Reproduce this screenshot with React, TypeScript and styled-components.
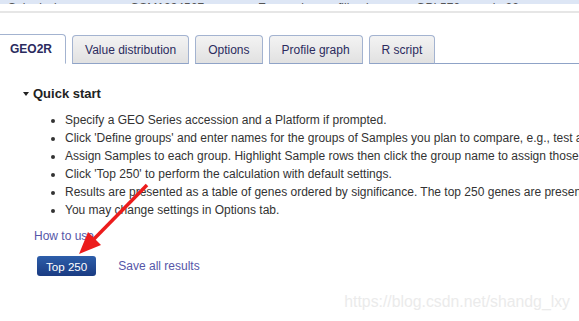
import styled, { createGlobalStyle } from 'styled-components';

const GlobalStyle = createGlobalStyle`
  html, body {
    margin: 0;
    padding: 0;
    background: #fff;
  }
  body {
    font-family: "Liberation Sans", Arial, sans-serif;
    color: #333;
    overflow: hidden;
  }
`;

const tabs = ['GEO2R', 'Value distribution', 'Options', 'Profile graph', 'R script'];

const steps = [
    'Specify a GEO Series accession and a Platform if prompted.',
    "Click 'Define groups' and enter names for the groups of Samples you plan to compare, e.g., test and control.",
    'Assign Samples to each group. Highlight Sample rows then click the group name to assign those Samples to the group.',
    "Click 'Top 250' to perform the calculation with default settings.",
    'Results are presented as a table of genes ordered by significance. The top 250 genes are presented.',
    'You may change settings in Options tab.',
];

const App = () => {
    return (
        <Page>
            <GlobalStyle />
            <TopRow>
                <TopCell $width={122}>Submission</TopCell>
                <TopCell $width={128}>GSM1234567</TopCell>
                <TopCell $width={260}>Expression profiling by array: GPL570 sample 22</TopCell>
            </TopRow>
            <Separator />
            <TabBar>
                {tabs.map((t, i) => (
                    <Tab key={t} $active={i === 0}>{t}</Tab>
                ))}
                <TabFill />
            </TabBar>
            <Content>
                <SectionTitle>
                    <Caret />
                    Quick start
                </SectionTitle>
                <StepList>
                    {steps.map((s) => <Step key={s}>{s}</Step>)}
                </StepList>
                <HowTo>How to use</HowTo>
                <Actions>
                    <PrimaryButton>Top 250</PrimaryButton>
                    <ActionLink>Save all results</ActionLink>
                </Actions>
            </Content>
            <Arrow width="579" height="321" viewBox="0 0 579 321">
                <line x1="147" y1="185" x2="94" y2="239" stroke="#ec1c1c" strokeWidth="3.5" />
                <polygon points="79,254 88,232 101,245" fill="#ec1c1c" />
            </Arrow>
            <Watermark>https://blog.csdn.net/shandg_lxy</Watermark>
        </Page>
    )
}

export default App

const Page = styled.div`
  position: relative;
  width: 579px;
  height: 321px;
  overflow: hidden;
`;

const TopRow = styled.div`
  display: flex;
  align-items: flex-end;
  height: 4px;
  overflow: hidden;
  background: #dde6f5;
  padding-left: 8px;
`;

const TopCell = styled.div<{ $width: number }>`
  width: ${(p) => p.$width}px;
  flex-shrink: 0;
  font-size: 12px;
  line-height: 12px;
  white-space: nowrap;
  color: #555;
  transform: translateY(10px);
`;

const Separator = styled.div`
  margin-top: 7px;
  height: 2px;
  background: #e6e6e6;
`;

const TabBar = styled.div`
  display: flex;
  align-items: flex-end;
  margin-top: 21px;
  margin-left: -4px;
  gap: 6px;
`;

const Tab = styled.div<{ $active?: boolean }>`
  height: ${(p) => (p.$active ? '28px' : '27px')};
  padding: 0 ${(p) => (p.$active ? '13px' : '12px')};
  display: flex;
  align-items: center;
  font-size: 12px;
  font-weight: ${(p) => (p.$active ? 700 : 400)};
  color: #2b2b5e;
  border: 1px solid #a3b3d0;
  border-bottom: ${(p) => (p.$active ? '1px solid #fff' : '1px solid #8fa3c7')};
  border-radius: 4px 4px 0 0;
  background: ${(p) => (p.$active ? '#fff' : 'linear-gradient(#f3f3f3, #e1e1e1)')};
  white-space: nowrap;
`;

const TabFill = styled.div`
  flex: 1;
  margin-left: -6px;
  border-bottom: 1px solid #8fa3c7;
`;

const Content = styled.div`
  padding-left: 23px;
`;

const SectionTitle = styled.div`
  display: flex;
  align-items: center;
  gap: 4px;
  margin-top: 21px;
  font-size: 13px;
  font-weight: 700;
  line-height: 18px;
  color: #222;
`;

const Caret = styled.span`
  width: 0;
  height: 0;
  border-left: 3.5px solid transparent;
  border-right: 3.5px solid transparent;
  border-top: 4px solid #222;
`;

const StepList = styled.ul`
  margin: 8px 0 0 0;
  padding-left: 42px;
  font-size: 12px;
  line-height: 18px;
  white-space: nowrap;
`;

const Step = styled.li``;

const HowTo = styled.a`
  display: block;
  margin: 8px 0 0 11px;
  font-size: 12px;
  line-height: 18px;
  color: #5656a8;
  cursor: pointer;
`;

const Actions = styled.div`
  display: flex;
  align-items: center;
  gap: 22px;
  margin: 11px 0 0 14px;
`;

const PrimaryButton = styled.button`
  height: 20px;
  padding: 0 9px;
  border: none;
  border-radius: 3px;
  font-family: "Liberation Sans", Arial, sans-serif;
  font-size: 11.6px;
  color: #fff;
  background: linear-gradient(#2d5eaa, #1a3b82);
  cursor: pointer;
`;

const ActionLink = styled.a`
  font-size: 12px;
  color: #5656a8;
  cursor: pointer;
`;

const Arrow = styled.svg`
  position: absolute;
  left: 0;
  top: 0;
  pointer-events: none;
`;

const Watermark = styled.div`
  position: absolute;
  right: 9px;
  bottom: 10px;
  font-size: 15.8px;
  color: #ebebeb;
`;
